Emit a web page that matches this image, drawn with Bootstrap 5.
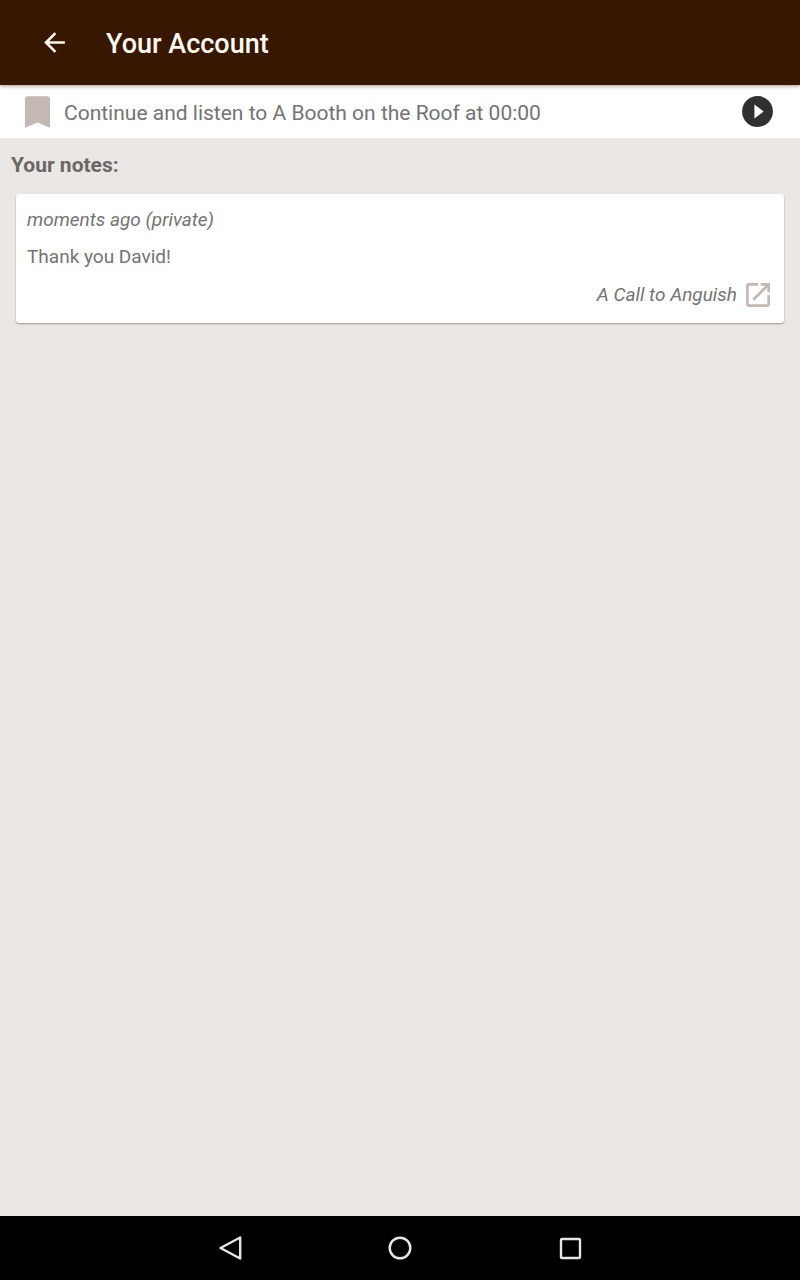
<!DOCTYPE html>
<html lang="en">
<head>
<meta charset="utf-8">
<meta name="viewport" content="width=device-width, initial-scale=1">
<title>Your Account</title>
<link href="https://cdn.jsdelivr.net/npm/bootstrap@5.3.0/dist/css/bootstrap.min.css" rel="stylesheet">
<style>
body{font-family:Roboto,sans-serif;background:#ebe7e4;color:#737373}
.icon-btn{background:none;border:0;padding:0;line-height:0;color:inherit}
svg{display:block;flex-shrink:0}
.app-bar{background:#371700;height:85px;padding-left:39px;gap:36px;box-shadow:0 1px 4px rgba(55,23,0,.45);z-index:1}
.app-title{font-size:27px;line-height:32px;font-weight:500;padding-top:2px;color:#fffaf0}
.resume-bar{height:53px;padding:0 24px 0 16px;gap:5px}
.resume-text{font-size:21px;line-height:28px;padding-top:2px}
.notes{padding:13px 16px}
.notes-title{font-size:21px;line-height:28px;font-weight:700;color:#6b6765;margin:0 0 15px -5px}
.note-card{border:0;border-radius:3px;box-shadow:0 1px 2px rgba(0,0,0,.35);padding:11px 10px 12px 11px;gap:7px;color:#737373;font-size:19px;line-height:30px}
.note-link{gap:5px}
.sys-nav{background:#000;height:64px;gap:138px;color:#e6e6e6}
</style>
</head>
<body class="d-flex flex-column min-vh-100">
<header class="app-bar d-flex align-items-center text-white position-relative">
<button class="icon-btn" type="button" aria-label="Back"><svg width="31" height="31" viewBox="0 0 24 24" fill="#fffaf0"><path d="M20 11H7.830l5.590-5.590L12 4l-8 8 8 8 1.410-1.410L7.830 13H20v-2z"/></svg></button>
<h1 class="app-title m-0">Your Account</h1>
</header>
<section class="resume-bar bg-white d-flex align-items-center">
<svg width="43" height="42" viewBox="0 0 24 24" preserveAspectRatio="none" fill="#c4b8b4" aria-hidden="true"><path d="M17.500 3h-11C5.600 3 5 3.600 5 4.500V21l7-3 7 3V4.500c0-.9-.6-1.500-1.500-1.500z"/></svg>
<p class="resume-text m-0 flex-grow-1">Continue and listen to A Booth on the Roof at 00:00</p>
<button class="icon-btn" type="button" aria-label="Play"><svg width="37" height="37" viewBox="0 0 24 24" fill="#303030"><path d="M12 2a10 10 0 1 0 0 20 10 10 0 0 0 0-20zm-2 14.500v-9l6 4.500-6 4.500z"/></svg></button>
</section>
<main class="notes flex-grow-1">
<h2 class="notes-title">Your notes:</h2>
<article class="card note-card">
<p class="fst-italic m-0">moments ago (private)</p>
<p class="m-0">Thank you David!</p>
<a class="note-link d-flex justify-content-end align-items-center fst-italic text-decoration-none text-reset" href="#">A Call to Anguish
<svg width="32" height="32" viewBox="0 0 24 24" fill="#c4b8b4" aria-hidden="true"><path d="M19 19H5V5h7V3H5c-1.110 0-2 .9-2 2v14c0 1.100.890 2 2 2h14c1.100 0 2-.9 2-2v-7h-2v7zM14 3v2h3.590l-9.830 9.830 1.410 1.410L19 6.410V10h2V3h-7z"/></svg></a>
</article>
</main>
<nav class="sys-nav d-flex justify-content-center align-items-center" aria-label="System">
<button class="icon-btn" type="button" aria-label="Back"><svg width="32" height="32" viewBox="0 0 32 32" fill="none" stroke="currentColor" stroke-width="2.400" stroke-linejoin="round"><path d="M26.200 5.500v21L6.500 16z"/></svg></button>
<button class="icon-btn" type="button" aria-label="Home"><svg width="32" height="32" viewBox="0 0 32 32" fill="none" stroke="currentColor" stroke-width="2.400"><circle cx="16" cy="16" r="10.300"/></svg></button>
<button class="icon-btn" type="button" aria-label="Recent apps"><svg width="32" height="32" viewBox="0 0 32 32" fill="none" stroke="currentColor" stroke-width="2.400"><rect x="7" y="7" width="19" height="19" rx="1"/></svg></button>
</nav>
<script src="https://cdn.jsdelivr.net/npm/bootstrap@5.3.0/dist/js/bootstrap.bundle.min.js"></script>
</body>
</html>
